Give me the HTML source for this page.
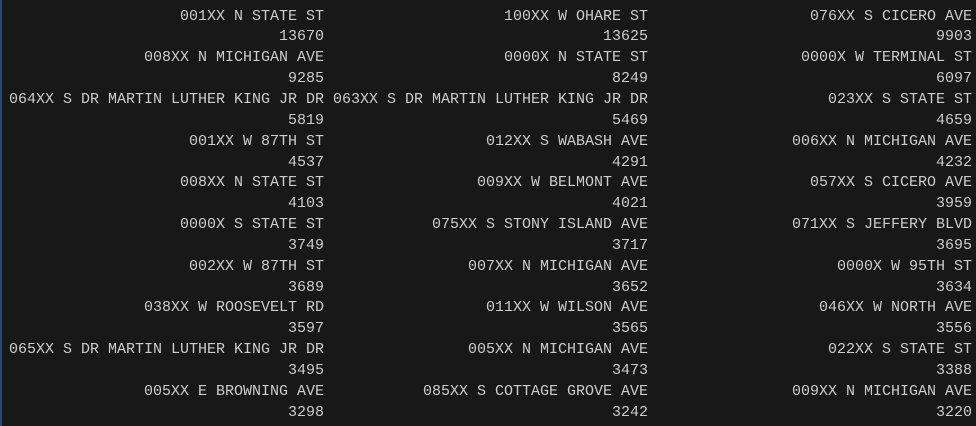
<!DOCTYPE html>
<html><head><style>
html,body{margin:0;padding:0;}
body{width:976px;height:426px;background:#181818;overflow:hidden;position:relative;font-family:"Liberation Mono","DejaVu Sans Mono",monospace;font-size:15px;color:#cccccc;}
.edge{position:absolute;left:0;top:0;width:2px;height:426px;background:#2b4a6b;}
.col{position:absolute;top:6.6px;text-align:right;white-space:pre;line-height:20.84px;}
</style></head><body>
<div class="edge"></div>
<div class="col" style="right:652px">001XX N STATE ST
13670
008XX N MICHIGAN AVE
9285
064XX S DR MARTIN LUTHER KING JR DR
5819
001XX W 87TH ST
4537
008XX N STATE ST
4103
0000X S STATE ST
3749
002XX W 87TH ST
3689
038XX W ROOSEVELT RD
3597
065XX S DR MARTIN LUTHER KING JR DR
3495
005XX E BROWNING AVE
3298</div>
<div class="col" style="right:328px">100XX W OHARE ST
13625
0000X N STATE ST
8249
063XX S DR MARTIN LUTHER KING JR DR
5469
012XX S WABASH AVE
4291
009XX W BELMONT AVE
4021
075XX S STONY ISLAND AVE
3717
007XX N MICHIGAN AVE
3652
011XX W WILSON AVE
3565
005XX N MICHIGAN AVE
3473
085XX S COTTAGE GROVE AVE
3242</div>
<div class="col" style="right:4px">076XX S CICERO AVE
9903
0000X W TERMINAL ST
6097
023XX S STATE ST
4659
006XX N MICHIGAN AVE
4232
057XX S CICERO AVE
3959
071XX S JEFFERY BLVD
3695
0000X W 95TH ST
3634
046XX W NORTH AVE
3556
022XX S STATE ST
3388
009XX N MICHIGAN AVE
3220</div>
</body></html>
